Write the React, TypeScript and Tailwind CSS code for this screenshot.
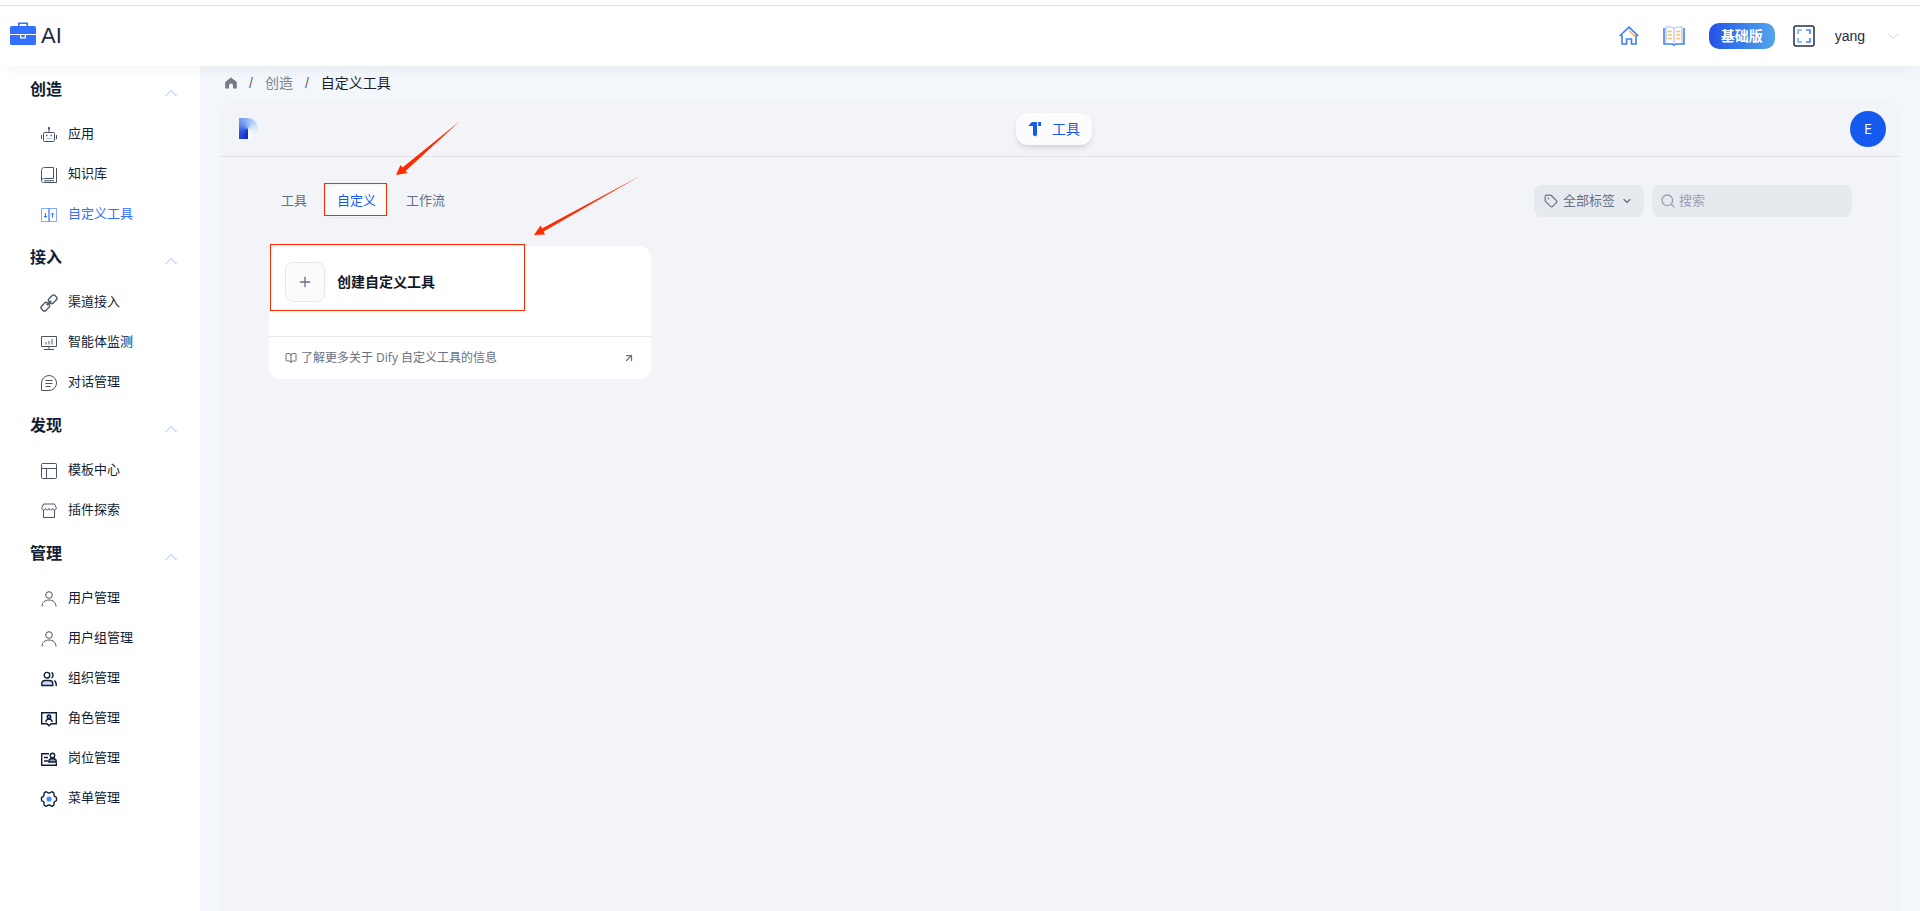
import React from "react";
import { ArrowUpRight, BookOpen, ChevronDown, Plus, Search, Tag } from "lucide-react";

type IconProps = { className?: string };

const line = {
  viewBox: "0 0 16 16",
  fill: "none",
  stroke: "currentColor",
  strokeWidth: 1,
} as const;

const RobotIcon = ({ className }: IconProps) => (
  <svg {...line} className={className}>
    <rect x="2.5" y="5.5" width="11" height="9" rx="1" />
    <path d="M8 5.5V1M.5 8v4M15.5 8v4" />
    <path d="M8 0v2.500" strokeWidth="1.800" />
    <path d="M5 8.500h1.400M9.600 8.500H11" strokeWidth="1.500" />
    <path d="M5.500 11.500h5" stroke="#a9c6ff" />
  </svg>
);

const BookIcon = ({ className }: IconProps) => (
  <svg {...line} className={className}>
    <path d="M12.5 11.5V.5h-9c-1.800 0-3 1-3 3v10" />
    <path d="M12.5 11.5h-9c-1.800 0-3 .8-3 2s1 2 2 2h13V1" />
    <path d="M3 13.500h10M4.500 13.500v2M7 13.500v2M9.500 13.500v2M12 13.500v2" opacity=".7" />
  </svg>
);

const ToolIcon = ({ className }: IconProps) => (
  <svg {...line} className={className}>
    <path d="M.5 1.5h15v13H.5zM7.500 1.500v13M8.500 1.500v13" opacity=".6" />
    <path d="M4.500 6v4.500M3 9l1.500 1.500L6 9M11.500 10.500V6M10 7.500 11.500 6 13 7.500" />
  </svg>
);

const LinkIcon = ({ className }: IconProps) => (
  <svg {...line} className={className}>
    <g transform="rotate(-45 8 8)" strokeWidth="1.3">
      <rect x="-1.5" y="5" width="8.5" height="6" rx="2" />
      <rect x="9" y="5" width="8.5" height="6" rx="2" />
      <path d="M5 8h6" strokeWidth="2" />
    </g>
  </svg>
);

const MonitorIcon = ({ className }: IconProps) => (
  <svg {...line} className={className}>
    <path d="M.5 1.5h15v10H.5zM8 11.5v3M3 14.500h10" />
    <path d="M5 9.500V7M8 9.500V6M11 9.500V4" strokeWidth="1.600" opacity=".6" />
  </svg>
);

const ChatIcon = ({ className }: IconProps) => (
  <svg {...line} className={className}>
    <path d="M.5 15.5V8A7.5 7.5 0 1 1 8 15.5z" />
    <path d="M4.5 5.5h7M4.5 8.5h7M4.5 11.5h5" />
  </svg>
);

const TemplateIcon = ({ className }: IconProps) => (
  <svg {...line} className={className}>
    <rect x=".5" y=".5" width="15" height="15" rx="1" />
    <path d="M.5 5.5h15M5.5 5.5v10" />
  </svg>
);

const StoreIcon = ({ className }: IconProps) => (
  <svg {...line} className={className}>
    <path d="M2.5 1h11l1.800 4c0 2.500-3.500 2.500-3.700.3C11.300 7.500 8.200 7.500 8 5.300 7.800 7.500 4.700 7.500 4.400 5.300 4.200 7.500.7 7.500.7 5z" />
    <path d="M2.500 7v7.500h11V7" />
  </svg>
);

const UserIcon = ({ className }: IconProps) => (
  <svg {...line} className={className}>
    <circle cx="8" cy="4" r="3.3" />
    <path d="M1 15.500c0-4 3-6.500 7-6.500s7 2.500 7 6.500" />
  </svg>
);

const TeamIcon = ({ className }: IconProps) => (
  <svg {...line} strokeWidth={1.4} className={className}>
    <circle cx="6" cy="4.2" r="2.8" />
    <path d="M.8 14.500V13c0-2.300 1.500-3.500 3.500-3.500h4c2 0 3.500 1.200 3.500 3.500v1.500z" fill="#c9defa" />
    <path d="M10.500 1.500c2 .8 2 4.500 0 5.500M13.500 9.700c1.300.8 1.800 2 1.800 5.300" />
  </svg>
);

const RoleIcon = ({ className }: IconProps) => (
  <svg {...line} strokeWidth={1.4} className={className}>
    <path d="M.7 1.700h14.600v11H10l-2 2-2-2H.7z" />
    <circle cx="8" cy="5.800" r="1.800" fill="#5b9bff" />
    <path d="M4.800 11c.3-2 1.500-3 3.200-3s2.900 1 3.200 3" />
  </svg>
);

const PostIcon = ({ className }: IconProps) => (
  <svg {...line} strokeWidth={1.4} className={className}>
    <path d="M8 2.700H.7v11.600h14.600V12M3 6.500h4M3 10h4" />
    <circle cx="11.500" cy="4.500" r="2.200" />
    <path d="M7.800 11c0-2.300 1.500-3.500 3.700-3.500s3.800 1.200 3.800 3.500z" fill="#8fa6c8" />
  </svg>
);

const GearIcon = ({ className }: IconProps) => (
  <svg {...line} strokeWidth={1.4} className={className}>
    <path
      d="M5.200.7C6 .7 6.500 2 8 2S10 .7 10.800.7l2 1.200c.6.700-.2 2 .4 3s2.100.8 2.300 1.700v2.800c-.2.900-1.700.700-2.300 1.700s.2 2.300-.4 3l-2 1.200C10 15.300 9.500 14 8 14s-2 1.300-2.800 1.300l-2-1.200c-.6-.7.2-2-.4-3S.7 10.300.5 9.400V6.600C.7 5.700 2.200 5.900 2.800 4.900s-.2-2.300.4-3z"
      strokeLinejoin="round"
    />
    <circle cx="8" cy="8" r="2.600" fill="#3d8bff" stroke="none" />
  </svg>
);

const menu = [
  {
    title: "创造",
    items: [
      { label: "应用", icon: RobotIcon },
      { label: "知识库", icon: BookIcon },
      { label: "自定义工具", icon: ToolIcon, active: true },
    ],
  },
  {
    title: "接入",
    items: [
      { label: "渠道接入", icon: LinkIcon },
      { label: "智能体监测", icon: MonitorIcon },
      { label: "对话管理", icon: ChatIcon },
    ],
  },
  {
    title: "发现",
    items: [
      { label: "模板中心", icon: TemplateIcon },
      { label: "插件探索", icon: StoreIcon },
    ],
  },
  {
    title: "管理",
    items: [
      { label: "用户管理", icon: UserIcon },
      { label: "用户组管理", icon: UserIcon },
      { label: "组织管理", icon: TeamIcon, bold: true },
      { label: "角色管理", icon: RoleIcon, bold: true },
      { label: "岗位管理", icon: PostIcon, bold: true },
      { label: "菜单管理", icon: GearIcon, bold: true },
    ],
  },
];

const tabs = ["工具", "自定义", "工作流"];

const Header = () => (
  <header className="relative z-10 bg-white pt-[5px] shadow-[0_8px_16px_-6px_rgba(0,0,0,0.06)]">
    <div className="flex h-[61px] items-center justify-between border-t border-[#dfdfe1] pb-px pl-[10px] pr-5">
      <div className="flex items-center gap-[5px]">
        <svg viewBox="0 0 26 23" className="mb-1 h-[23px] w-[26px]">
          <path d="M8.800 4V1.200h8.400V4" fill="none" stroke="#3370ff" strokeWidth="1.600" />
          <path d="M1.500 4h23A1.500 1.500 0 0 1 26 5.500V12H0V5.500A1.500 1.500 0 0 1 1.500 4zM0 13h10v3.500h6V13h10v8.500a1.500 1.500 0 0 1-1.500 1.500h-23A1.500 1.500 0 0 1 0 21.500z" fill="#3370ff" />
          <path d="M11.300 13h3.400v2.200h-3.400z" fill="#3370ff" />
        </svg>
        <span className="text-[22px] leading-8 text-[#1d2a44]">AI</span>
      </div>
      <div className="flex items-center">
        <button aria-label="首页">
          <svg viewBox="0 0 20 19" fill="none" stroke="#3f7df2" strokeWidth="1.6" className="h-[19px] w-5">
            <path d="M.7 10 10 1.200 19.300 10M3 9v9h4.500v-5h5v5H17V9" />
            <path d="m10 4.500 6 5.700" stroke="#ffb84d" />
          </svg>
        </button>
        <button aria-label="文档" className="ml-6">
          <svg viewBox="0 0 22 20" fill="none" strokeWidth="1.4" className="h-5 w-[22px]">
            <path d="M3 16.500V1c3-.4 6 0 8 1.300C13 1 16 .6 19 1v15.500" stroke="#b9ccf5" />
            <path d="M11 2.300V17" stroke="#b9ccf5" />
            <path d="M1 2v16h8.300l1.700 1 1.700-1H21V2" stroke="#4a80f0" strokeWidth="1.600" />
            <path d="M4.500 5.500H9M4.500 9H9M4.500 12.500H9M13 5.500h4.500M13 9h4.500M13 12.500h4.500" stroke="#ffbf66" />
          </svg>
        </button>
        <button className="ml-6 h-[26px] w-[66px] rounded-[10px] bg-linear-to-r from-[#2750e8] to-[#56a4ea] text-sm font-bold text-white">
          基础版
        </button>
        <button aria-label="全屏" className="ml-[18px]">
          <svg viewBox="0 0 22 22" fill="none" className="h-[22px] w-[22px]">
            <rect x="1" y="1" width="20" height="20" rx="2" stroke="#22304a" strokeWidth="1.5" />
            <path d="M5 9V5h4M5 13v4h4" stroke="#6bb2ff" strokeWidth="1.6" />
            <path d="M13 5h4v4M17 13v4h-4" stroke="#4a7df5" strokeWidth="1.6" />
          </svg>
        </button>
        <button className="ml-5 flex items-center gap-[21px] text-sm text-[#1d2a44]">
          yang
          <svg viewBox="0 0 14 14" fill="none" stroke="#c3cfe2" className="h-[14px] w-[14px]">
            <path d="m2 4.500 5 5 5-5" />
          </svg>
        </button>
      </div>
    </div>
  </header>
);

const Sidebar = () => (
  <nav className="w-[200px] shrink-0 bg-white">
    {menu.map((group) => (
      <div key={group.title}>
        <button className="flex h-12 w-full items-center justify-between pl-[30px] pr-[23px] text-base font-bold text-[#101d36]">
          {group.title}
          <svg viewBox="0 0 12 12" fill="none" stroke="#9fbafa" className="mt-[5px] h-3 w-3">
            <path d="m.5 9 5.500-5.500L11.500 9" />
          </svg>
        </button>
        <ul>
          {group.items.map((item) => (
            <li key={item.label}>
              <a
                href="#"
                className={`flex h-10 items-center gap-[11px] pl-[41px] text-[13px] ${
                  item.active ? "text-[#3370ff]" : "text-[#101d36]"
                }`}
              >
                <item.icon
                  className={`mt-px h-4 w-4 shrink-0 overflow-visible ${item.bold || item.active ? "" : "text-[#4a5468]"}`}
                />
                {item.label}
              </a>
            </li>
          ))}
        </ul>
      </div>
    ))}
  </nav>
);

const Breadcrumb = () => (
  <nav className="flex h-[35px] items-center gap-3 pb-0.5 pl-[5px] text-sm text-[#7d838c]">
    <a href="#" aria-label="首页">
      <svg viewBox="0 0 12 12" fill="#757b85" className="h-3 w-3">
        <path d="M6 .5 11.800 5v6.500H8V8.500a2 2 0 0 0-4 0v3H.2V5z" />
      </svg>
    </a>
    <span className="text-[#5d636e]">/</span>
    <a href="#">创造</a>
    <span className="text-[#5d636e]">/</span>
    <span className="text-[#1d2129]">自定义工具</span>
  </nav>
);

const Toolbar = () => (
  <div className="flex items-center justify-between">
    <div className="flex gap-1">
      {tabs.map((tab) => (
        <div key={tab} className="relative">
          <button
            className={`h-8 rounded-lg border px-3 text-[13px] ${
              tab === "自定义"
                ? "border-[#f6f7f9] bg-[#fcfcfd] text-[#155aef] shadow-xs"
                : "border-transparent text-[#676f83]"
            }`}
          >
            {tab}
          </button>
          {tab === "自定义" && (
            <>
              <div className="pointer-events-none absolute -top-[2px] left-0 h-[33px] w-[63px] border border-[#ff2a00]" />
              <svg viewBox="0 0 64 54" className="pointer-events-none absolute -top-16 left-[72px] h-[54px] w-16">
                <path d="M0 54 4.500 44l2 2.500L64 0 9.500 50l2 2z" fill="#ff2a00" />
              </svg>
            </>
          )}
        </div>
      ))}
    </div>
    <div className="flex gap-2">
      <label className="flex h-8 items-center gap-[5px] rounded-lg bg-[#e6e9ee] px-[10px] text-[#676f83]">
        <Tag className="h-[14px] w-[14px]" />
        <select aria-label="标签" className="w-[52px] appearance-none bg-transparent text-[13px]">
          <option>全部标签</option>
        </select>
        <ChevronDown className="h-3 w-[14px]" strokeWidth={2.5} />
      </label>
      <label className="flex h-8 w-[200px] items-center gap-[3px] rounded-lg bg-[#e6e9ee] px-2 text-[#98a2b2]">
        <Search className="h-4 w-4 shrink-0" />
        <input
          type="text"
          aria-label="搜索"
          placeholder="搜索"
          className="w-full min-w-0 bg-transparent text-[13px] outline-none placeholder:text-[#98a2b2]"
        />
      </label>
    </div>
  </div>
);

const CreateCard = () => (
  <div className="relative">
    <div className="rounded-xl border border-[#f2f4f8] bg-white bg-clip-padding">
      <button className="flex h-[90px] w-full items-start gap-3 p-4 text-left">
        <span className="flex h-10 w-10 items-center justify-center rounded-lg border border-[#e6e8ef] bg-[#fbfbfc] text-[#676f83]">
          <Plus className="h-4 w-4" />
        </span>
        <span className="text-sm leading-10 font-bold text-[#101828]">创建自定义工具</span>
      </button>
      <a
        href="#"
        className="flex h-[43px] items-center gap-1 border-t border-[#e9ebef] px-4 text-xs text-[#676f83]"
      >
        <BookOpen className="h-3 w-3" />
        <span className="flex-1">了解更多关于 Dify 自定义工具的信息</span>
        <ArrowUpRight className="h-3 w-3" strokeWidth={2.5} />
      </a>
    </div>
    <div className="pointer-events-none absolute -top-px left-[2px] h-[67px] w-[255px] border border-[#ff2a00]" />
    <svg viewBox="0 0 106 59" className="pointer-events-none absolute -top-[69px] left-[266px] h-[59px] w-[106px]">
      <path d="m0 59 6.500-9.500 1.500 3L106 0 9.500 55.500l1.500 3z" fill="#ff2a00" />
    </svg>
  </div>
);

const App = () => {
  return (
    <div className="flex min-h-screen flex-col bg-[#f3f7fb] font-['Liberation_Sans','Noto_Sans_CJK_SC',sans-serif]">
      <Header />
      <div className="flex flex-1">
        <Sidebar />
        <main className="flex min-w-0 flex-1 flex-col px-5">
          <Breadcrumb />
          <section className="flex-1 rounded-t-xl bg-[#f2f4f8] font-['Open_Sans','Noto_Sans_CJK_SC',sans-serif]">
            <div className="flex h-14 items-center justify-between border-b border-[#e0e2e7] pl-[19px] pr-[14px]">
              <div className="h-[21px] w-[19px] rounded-r-full bg-[conic-gradient(from_180deg_at_48%_52%,#0c29c8_0%,#2c50de_18%,#6f94ee_36%,#a9c8fa_56%,#dce9fd_74%,#ffffff_100%)]" />
              <button className="flex h-8 items-center gap-[10px] rounded-xl bg-[#fcfcfd] px-3 text-sm text-[#155aef] shadow-md">
                <svg viewBox="0 0 14 16" fill="currentColor" className="h-4 w-[14px]">
                  <path d="M.5 4.500C2 4 2.500 1 5 1h4v13l-2 1.500L5 14V5H.5zM10.200 1H13v4h-2.800z" />
                </svg>
                工具
              </button>
              <button className="h-9 w-9 rounded-full bg-[#155aef] text-sm text-white">E</button>
            </div>
            <div className="px-12 pt-7">
              <Toolbar />
              <div className="mt-7 grid grid-cols-4 gap-4">
                <CreateCard />
              </div>
            </div>
          </section>
        </main>
      </div>
    </div>
  );
};

export default App;
